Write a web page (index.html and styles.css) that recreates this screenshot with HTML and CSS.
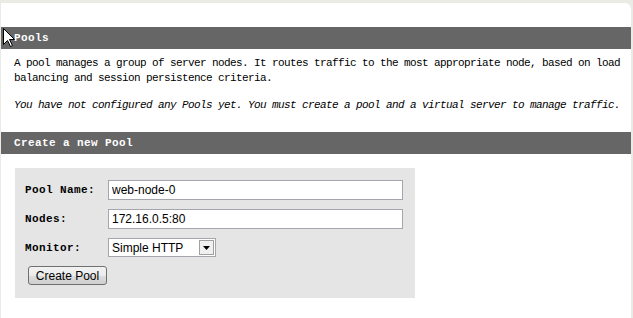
FILE: index.html
```html
<!DOCTYPE html>
<html lang="en">
<head>
  <meta charset="UTF-8">
  <title>Pools</title>
  <link rel="stylesheet" href="styles.css">
</head>
<body>
  <div class="page">
    <h2 class="band">Pools</h2>
    <p class="intro">A pool manages a group of server nodes. It routes traffic to the most appropriate node, based on load balancing and session persistence criteria.</p>
    <p class="intro note">You have not configured any Pools yet. You must create a pool and a virtual server to manage traffic.</p>

    <h2 class="band">Create a new Pool</h2>
    <form class="pool-form">
      <label for="poolName">Pool Name:</label>
      <input id="poolName" type="text" value="web-node-0">

      <label for="nodes">Nodes:</label>
      <input id="nodes" type="text" value="172.16.0.5:80">

      <label for="monitor">Monitor:</label>
      <div class="select-wrap">
        <select id="monitor">
          <option>Simple HTTP</option>
        </select>
        <span class="select-arrow"><svg width="7" height="4" viewBox="0 0 7 4"><path d="M0 0H7L3.5 4Z" fill="#000"/></svg></span>
      </div>

      <button type="button" class="button">Create Pool</button>
    </form>
  </div>

  <!-- mouse pointer caught in the screenshot -->
  <svg class="cursor" width="12" height="19" viewBox="0 0 12 19">
    <path d="M0.5 0.5V16.5L4.5 12.5L7.5 18.5L9.5 17.5L6.5 11.5H11.5Z" fill="#fff" stroke="#000" stroke-width="1"/>
  </svg>
</body>
</html>
```

FILE: styles.css
```css
body {
  margin: 0;
  background-color: #ebebe6;
  font-family: 'Liberation Mono', monospace;
  color: #000;
}

.page {
  margin: 3px 2px 0 1px;
  padding-top: 24px;
  background-color: #fff;
  border-top-right-radius: 6px;
  min-height: calc(100vh - 27px);
}

.band {
  margin: 0;
  height: 22px;
  line-height: 22px;
  padding-left: 13px;
  background-color: #666;
  color: #fff;
  font-size: 11px;
  font-weight: bold;
  letter-spacing: 0.4px;
}

.intro {
  margin: 7px 8px 0 13px;
  font-size: 11px;
  line-height: 15px;
  letter-spacing: -0.6px;
}

.intro.note {
  margin-top: 12px;
  margin-bottom: 19px;
  font-style: italic;
}

.pool-form {
  display: grid;
  grid-template-columns: 83px 295px;
  row-gap: 9px;
  align-items: center;
  width: 400px;
  box-sizing: border-box;
  margin: 14px 0 0 14px;
  padding: 12px 10px 13px 10px;
  background-color: #e5e5e5;
}

.pool-form label {
  font-size: 11px;
  font-weight: bold;
  letter-spacing: 0.4px;
}

.pool-form input {
  box-sizing: border-box;
  width: 295px;
  height: 20px;
  margin: 0;
  padding: 0 3px;
  border: 1px solid #a5a5ad;
  font-family: 'Liberation Sans', Arial, sans-serif;
  font-size: 12px;
  color: #000;
  background: #fff;
}

.select-wrap {
  position: relative;
  width: 108px;
  height: 19px;
}

.select-wrap select {
  appearance: none;
  -webkit-appearance: none;
  box-sizing: border-box;
  width: 108px;
  height: 19px;
  margin: 0;
  padding: 0 0 0 3px;
  border: 1px solid #a5a5ad;
  border-radius: 0;
  background: #fff;
  font-family: 'Liberation Sans', Arial, sans-serif;
  font-size: 12px;
  color: #000;
}

.select-arrow {
  position: absolute;
  top: 2px;
  right: 2px;
  width: 15px;
  height: 15px;
  box-sizing: border-box;
  border: 1px solid #a0a0a0;
  background-color: #f0f0f0;
  display: flex;
  align-items: center;
  justify-content: center;
  pointer-events: none;
}

.button {
  grid-column: 1 / 3;
  justify-self: start;
  margin-left: 3px;
  width: 79px;
  height: 19px;
  padding: 0;
  border: 1px solid #707070;
  border-radius: 3px;
  background: linear-gradient(#f2f2f2, #ebebeb 50%, #dddddd 51%, #cfcfcf);
  font-family: 'Liberation Sans', Arial, sans-serif;
  font-size: 12px;
  color: #000;
}

.cursor {
  position: absolute;
  left: 3px;
  top: 28px;
}
```
